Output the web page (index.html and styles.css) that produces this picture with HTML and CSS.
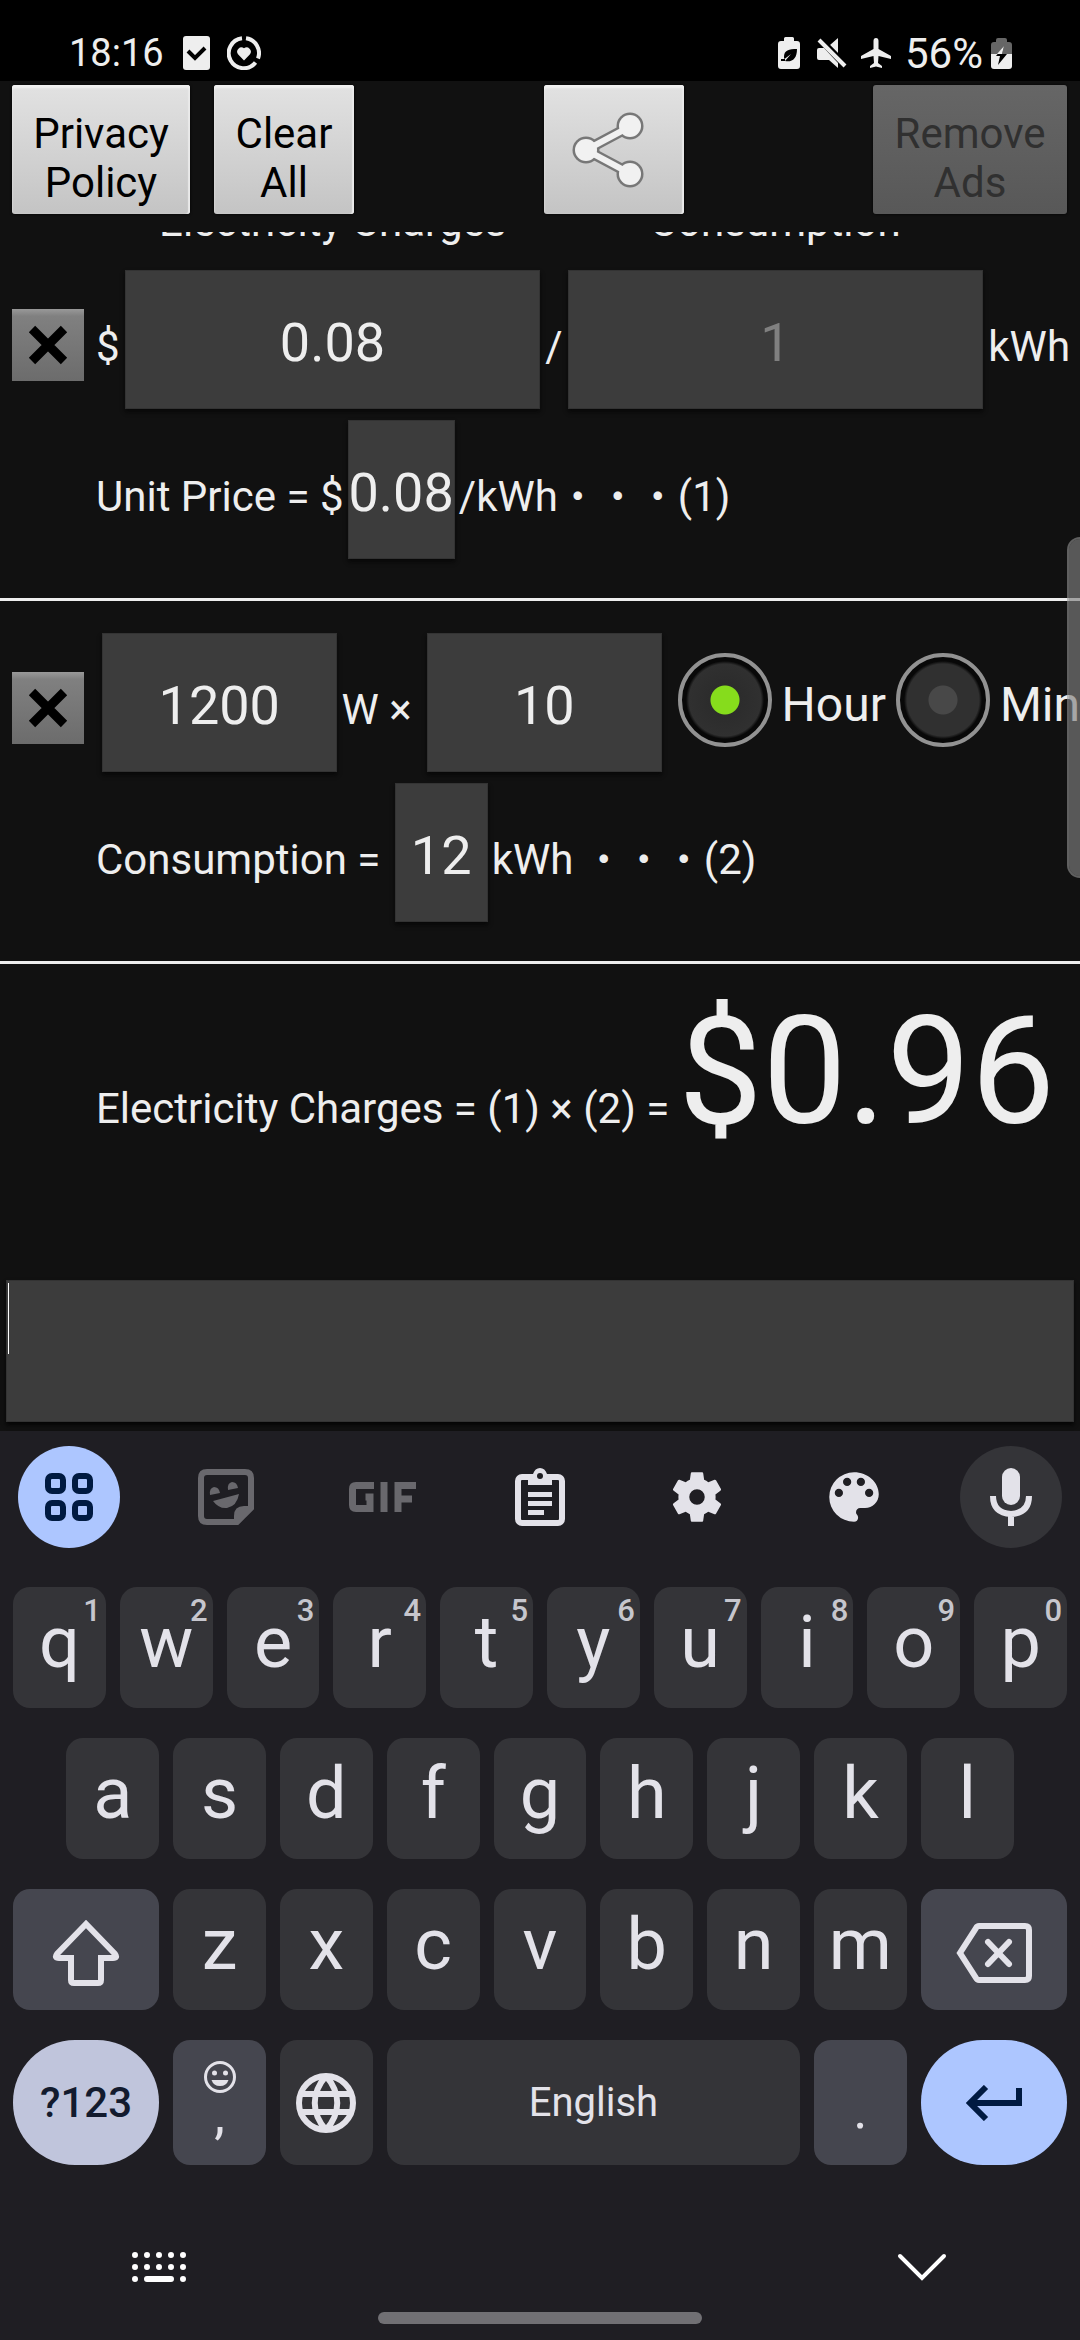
FILE: index.html
```html
<!DOCTYPE html>
<html lang="en">
<head>
<meta charset="utf-8">
<meta name="viewport" content="width=device-width, initial-scale=1">
<title>Electricity Charges</title>
<link rel="stylesheet" href="styles.css">
</head>
<body>
<header class="status">
  <div class="status-group">
    <time class="clock">18:16</time>
    <svg class="st-check" width="27" height="34" viewBox="0 0 27 34"><rect width="27" height="34" rx="3" fill="#eee"/><path d="M5 15l7 7L22 12" fill="none" stroke="#000" stroke-width="4"/></svg>
    <svg width="34" height="34" viewBox="0 0 34 34"><g fill="none" stroke="#eee" stroke-width="4"><path d="M15 2.300A15 15 0 1 0 28.500 26.500"/><path d="M19 2.300A15 15 0 0 1 31 22.500"/></g><path d="M17 24.500l-6-6.300a4.300 4.300 0 0 1 6-6 4.300 4.300 0 0 1 6 6z" fill="#eee"/></svg>
  </div>
  <div class="status-group status-right">
    <svg width="22" height="32" viewBox="0 0 22 32"><path d="M6 4V1.500Q6 0 7.500 0h7Q16 0 16 1.500V4h3q3 0 3 3v22q0 3-3 3H3q-3 0-3-3V7q0-3 3-3z" fill="#eee"/><path d="M19 12c-8 0-13 1-13 8q0 1 .5 2L13 17l-6 7c7 1.500 12-2 12-12zM3 22h4v2H3z" fill="#000"/></svg>
    <svg class="st-mute" width="30" height="30" viewBox="0 0 30 30"><path d="M2 10h5l14 15v5l-9-8H2q-2 0-2-2v-8q0-2 2-2zM13 7l8-7v15z" fill="#eee"/><path d="M4 0l26 27" stroke="#000" stroke-width="3"/><path d="M2 2l26 26" stroke="#eee" stroke-width="4"/></svg>
    <svg class="st-plane" width="30" height="30" viewBox="0 0 30 30"><path d="M12.500 3q0-3 2.500-3t2.500 3v8L30 18v3l-12.500-3-.5 7 4 3v2l-6-1.500L9 30v-2l4-3-.5-7L0 21v-3l12.500-7z" fill="#eee"/></svg>
    <span class="percent">56%</span>
    <svg width="21" height="31" viewBox="0 0 21 31"><path d="M5 4V2q0-2 2-2h7q2 0 2 2v2h2q3 0 3 3v9H0V7q0-3 3-3z" fill="#666"/><path d="M0 16h21v12q0 3-3 3H3q-3 0-3-3z" fill="#eee"/><path d="M13 8L5 18h4l-2 9 9-11h-5z" fill="#000"/><path d="M13 8l-7 8h5z" fill="#eee"/></svg>
  </div>
</header>

<main class="app">
  <nav class="toolbar">
    <button class="btn btn-privacy">Privacy<br>Policy</button>
    <button class="btn btn-clear">Clear<br>All</button>
    <button class="btn btn-share" aria-label="Share">
      <svg width="74" height="78" viewBox="0 0 74 78"><g stroke="#777" fill="#777"><path d="M60 15L15 39l45 24" fill="none" stroke-width="11"/><circle cx="59" cy="15" r="13.500" stroke="none"/><circle cx="15" cy="39" r="13.500" stroke="none"/><circle cx="59" cy="63" r="13.500" stroke="none"/></g><g stroke="#f1f1f1" fill="#f1f1f1"><path d="M60 15L15 39l45 24" fill="none" stroke-width="6"/><circle cx="59" cy="15" r="11" stroke="none"/><circle cx="15" cy="39" r="11" stroke="none"/><circle cx="59" cy="63" r="11" stroke="none"/></g></svg>
    </button>
    <button class="btn btn-ads" disabled>Remove<br>Ads</button>
  </nav>

  <div class="scroller">
    <section class="block block-first">
      <div class="heads">
        <label for="price">Electricity Charges</label>
        <label for="amount">Consumption</label>
      </div>
      <div class="row row-price">
        <button class="clear" aria-label="Clear price"><svg width="40" height="40" viewBox="0 0 40 40"><path d="M4 4l32 32M36 4L4 36" stroke="#000" stroke-width="9"/></svg></button>
        <span class="lead">$</span>
        <input class="field" id="price" value="0.08">
        <span>/</span>
        <input class="field" id="amount" placeholder="1">
        <span>kWh</span>
      </div>
      <div class="row row-result">
        <span>Unit Price = $</span>
        <output class="result">0.08</output>
        <span>/kWh<span class="dots">・・・</span>(1)</span>
      </div>
    </section>

    <section class="block">
      <div class="row row-power">
        <button class="clear" aria-label="Clear power"><svg width="40" height="40" viewBox="0 0 40 40"><path d="M4 4l32 32M36 4L4 36" stroke="#000" stroke-width="9"/></svg></button>
        <input class="field field-power" aria-label="Power" value="1200">
        <span>W ×&nbsp;</span>
        <input class="field" aria-label="Time" value="10">
        <div class="units">
          <label class="unit"><input type="radio" name="unit" checked><span>Hour</span></label>
          <label class="unit"><input type="radio" name="unit"><span>Min</span></label>
        </div>
      </div>
      <div class="row row-result">
        <span>Consumption =&nbsp;</span>
        <output class="result">12</output>
        <span>kWh <span class="dots">・・・</span>(2)</span>
      </div>
    </section>

    <section class="block total">
      <span>Electricity Charges = (1) × (2) =</span>
      <output class="total-value">$0.96</output>
    </section>
    <div class="thumb"></div>
  </div>

  <div class="memo-wrap"><textarea class="memo" aria-label="Memo"></textarea></div>
</main>

<section class="keyboard">
  <div class="tools">
    <button class="tool tool-apps" aria-label="Features"><svg width="50" height="50" viewBox="0 0 50 50" fill="none" stroke="#001a41" stroke-width="6"><rect x="4" y="4" width="15" height="15" rx="4"/><rect x="31" y="4" width="15" height="15" rx="4"/><rect x="4" y="31" width="15" height="15" rx="4"/><rect x="31" y="31" width="15" height="15" rx="4"/></svg></button>
    <button class="tool" aria-label="Stickers"><svg width="56" height="56" viewBox="0 0 56 56"><path d="M9 3h38q6 0 6 6v30L39 53H9q-6 0-6-6V9q0-6 6-6z" fill="none" stroke="#69686d" stroke-width="6"/><path d="M36 53V47q0-10 10-10h8L38 54zM15 32l26-7q-2 12-12 14-8 1-14-7zM12 26q-1-7 4-8 5 0 6 6zM30 21q-1-7 4-8 5 0 6 6z" fill="#69686d"/></svg></button>
    <button class="tool" aria-label="GIF"><svg width="68" height="30" viewBox="0 0 68 30" fill="none" stroke="#69686d" stroke-width="7"><path d="M25 3.500H7Q3.500 3.500 3.500 7v16q0 3.500 3.500 3.500h14V15h-4.500"/><path d="M35 0v30M49 30V3.500h18M49 17h14"/></svg></button>
    <button class="tool" aria-label="Clipboard"><svg width="50" height="58" viewBox="0 0 50 58"><rect x="3" y="9" width="44" height="46" rx="4" fill="none" stroke="#e3e2e9" stroke-width="6"/><path d="M13 6h5q2-6 7-6t7 6h5v11H13zM13 24h24v5H13zM13 33h24v5H13zM13 42h16v5H13z" fill="#e3e2e9"/><circle cx="25" cy="8" r="3" fill="#1f1e23"/></svg></button>
    <button class="tool" aria-label="Settings"><svg width="62" height="62" viewBox="0 0 24 24"><path fill="#e3e2e9" d="M19.140 12.940c.04-.3.060-.61.060-.94 0-.32-.02-.64-.07-.94l2.030-1.580c.18-.14.230-.41.120-.61l-1.920-3.320c-.12-.22-.37-.29-.59-.22l-2.390.96c-.5-.38-1.030-.7-1.620-.94L14.400 2.810c-.04-.24-.24-.41-.48-.41h-3.840c-.24 0-.43.17-.47.41L9.250 5.350c-.59.24-1.130.57-1.620.94l-2.390-.96c-.22-.08-.47 0-.59.22L2.740 8.870c-.12.21-.08.47.12.610l2.030 1.580c-.05.3-.09.63-.09.94s.02.640.07.940l-2.030 1.580c-.18.14-.23.41-.12.610l1.920 3.320c.12.22.37.290.59.220l2.390-.96c.5.380 1.030.700 1.620.940l.36 2.540c.05.24.24.410.48.410h3.840c.24 0 .44-.17.470-.41l.36-2.540c.59-.24 1.130-.56 1.620-.94l2.390.96c.22.080.47 0 .59-.22l1.920-3.320c.12-.22.070-.47-.12-.61zM12 15a3 3 0 1 1 0-6 3 3 0 0 1 0 6z"/></svg></button>
    <button class="tool" aria-label="Themes"><svg width="66" height="66" viewBox="0 0 24 24"><path fill="#e3e2e9" d="M12 3a9 9 0 0 0 0 18c.83 0 1.500-.67 1.500-1.500 0-.39-.15-.74-.39-1.010-.23-.26-.38-.61-.38-.99 0-.83.670-1.500 1.500-1.500H16a5 5 0 0 0 5-5c0-4.420-4.030-8-9-8zm-5.500 9a1.500 1.500 0 1 1 0-3 1.500 1.500 0 0 1 0 3zm3-4a1.500 1.500 0 1 1 0-3 1.500 1.500 0 0 1 0 3zm5 0a1.500 1.500 0 1 1 0-3 1.500 1.500 0 0 1 0 3zm3 4a1.500 1.500 0 1 1 0-3 1.500 1.500 0 0 1 0 3z"/></svg></button>
    <button class="tool tool-mic" aria-label="Voice input"><svg width="42" height="58" viewBox="0 0 42 58"><rect x="12" width="18" height="37" rx="9" fill="#e3e2e9"/><path d="M3 28q0 17 18 18 18-1 18-18M21 46v12" fill="none" stroke="#e3e2e9" stroke-width="6"/></svg></button>
  </div>

  <div class="keys">
    <button class="key">q<sup>1</sup></button>
    <button class="key">w<sup>2</sup></button>
    <button class="key">e<sup>3</sup></button>
    <button class="key">r<sup>4</sup></button>
    <button class="key">t<sup>5</sup></button>
    <button class="key">y<sup>6</sup></button>
    <button class="key">u<sup>7</sup></button>
    <button class="key">i<sup>8</sup></button>
    <button class="key">o<sup>9</sup></button>
    <button class="key">p<sup>0</sup></button>

    <button class="key key-a">a</button>
    <button class="key">s</button>
    <button class="key">d</button>
    <button class="key">f</button>
    <button class="key">g</button>
    <button class="key">h</button>
    <button class="key">j</button>
    <button class="key">k</button>
    <button class="key">l</button>

    <button class="key key-wide key-mod" aria-label="Shift"><svg width="68" height="66" viewBox="0 0 68 66"><path d="M34 4L5 34q-3 4 2 4h12v22q0 3 3 3h24q3 0 3-3V38h12q5 0 2-4z" fill="none" stroke="#e3e2e9" stroke-width="6"/></svg></button>
    <button class="key">z</button>
    <button class="key">x</button>
    <button class="key">c</button>
    <button class="key">v</button>
    <button class="key">b</button>
    <button class="key">n</button>
    <button class="key">m</button>
    <button class="key key-wide key-mod" aria-label="Backspace"><svg width="76" height="60" viewBox="0 0 76 60" fill="none" stroke="#e3e2e9" stroke-width="6"><path d="M23 3h46q4 0 4 4v46q0 4-4 4H23q-2 0-3-2L4 30 20 5q1-2 3-2z"/><path d="M32 19l21 22M53 19L32 41" stroke-linecap="round"/></svg></button>

    <button class="key key-wide key-sym">?123</button>
    <button class="key key-mod key-comma"><svg width="34" height="34" viewBox="0 0 34 34"><circle cx="17" cy="17" r="14.500" fill="none" stroke="#e3e2e9" stroke-width="3"/><circle cx="11.500" cy="13" r="2.500" fill="#e3e2e9"/><circle cx="22.500" cy="13" r="2.500" fill="#e3e2e9"/><path d="M8.500 20h17q-2 6-8.500 6t-8.500-6z" fill="#e3e2e9"/></svg><span>,</span></button>
    <button class="key key-icon" aria-label="Language"><svg width="60" height="60" viewBox="0 0 60 60" fill="none" stroke="#e3e2e9" stroke-width="6"><circle cx="30" cy="30" r="27"/><path d="M30 3C15 20 15 40 30 57M30 3c15 17 15 37 0 54M5 21h50M5 39h50"/></svg></button>
    <button class="key key-space">English</button>
    <button class="key key-mod key-dot">.</button>
    <button class="key key-wide key-enter" aria-label="Enter"><svg width="58" height="36" viewBox="0 0 58 36" fill="none" stroke="#001a41" stroke-width="6"><path d="M54 3v15H6M21 2L5 18l16 16"/></svg></button>
  </div>

  <div class="nav">
    <button class="nav-btn" aria-label="Choose keyboard"><svg width="54" height="30" viewBox="0 0 54 30" stroke="#fff" stroke-width="6" stroke-linecap="round"><path d="M3 3h0M15 3h0M27 3h0M39 3h0M51 3h0M3 15h0M15 15h0M27 15h0M39 15h0M51 15h0M3 27h0M15 27h24M51 27h0"/></svg></button>
    <button class="nav-btn" aria-label="Hide keyboard"><svg width="50" height="28" viewBox="0 0 50 28" fill="none" stroke="#fff" stroke-width="4" stroke-linecap="round"><path d="M3 3l22 22L47 3"/></svg></button>
  </div>
  <div class="home"></div>
</section>
</body>
</html>
```
FILE: styles.css
```css
* { box-sizing: border-box; }

body {
  margin: 0;
  min-height: 100vh;
  display: flex;
  flex-direction: column;
  background: #1f1e23;
  color: #eee;
  font-family: Roboto, "Liberation Sans", sans-serif;
  font-size: 42px;
  line-height: 49px;
}

button, input, textarea {
  margin: 0;
  border: 0;
  font: inherit;
  color: inherit;
}
button { padding: 0; background: none; }
svg { display: block; flex: none; }

/* status bar */
.status {
  display: flex;
  justify-content: space-between;
  height: 81px;
  padding: 25px 68px 0 69px;
  background: #000;
}
.status-group { display: flex; align-items: center; height: 56px; gap: 17px; }
.status-right { gap: 8px; }
.clock { font-size: 38px; }
.percent { font-size: 42px; }
.st-check { margin-left: 2px; }
.st-mute { margin-left: 9px; }
.st-plane { margin: 0 6px; }

/* app */
.app { background: #111; }
.toolbar {
  display: flex;
  height: 151px;
  padding: 4px 13px 18px 12px;
}
.btn {
  padding-top: 17px;
  border-radius: 3px;
  background: linear-gradient(#e2e2e2, #c4c4c4);
  box-shadow: inset 0 3px 2px #f0f0f0, inset -2px 0 1px #e8e8e8, 0 0 3px #000;
  color: #000;
}
.btn-privacy { width: 178px; }
.btn-clear { width: 140px; margin-left: 24px; }
.btn-share {
  display: flex;
  justify-content: center;
  align-items: center;
  width: 140px;
  margin: 0 auto;
  padding: 0 12px 0 0;
}
.btn-ads {
  width: 194px;
  background: linear-gradient(#666, #585858);
  box-shadow: 0 0 3px #000;
  color: #303030;
}

.scroller { position: relative; overflow: hidden; white-space: nowrap; }
.block { padding: 32px 0 39px; border-bottom: 3px solid #eee; }
.block-first { padding-top: 0; }
.heads {
  display: flex;
  gap: 27px;
  margin: -35px 97px 24px 125px;
  text-align: center;
}
.heads label { flex: 1; }

.row { display: flex; align-items: baseline; gap: 5px; }
.row + .row { margin-top: 11px; }
.row-price { padding: 0 10px 0 12px; }
.row-power { padding-left: 12px; }
.row-result { gap: 4px; padding-left: 96px; }
.lead { margin-left: 7px; }

.clear {
  display: flex;
  flex: none;
  align-self: center;
  justify-content: center;
  align-items: center;
  width: 72px;
  height: 72px;
  margin-top: 11px;
  background: linear-gradient(#999, #808080 10%, #6c6c6c);
}
.field, .result {
  height: 139px;
  padding: 6px 0 0;
  border: 1px solid #333;
  background: #3c3c3c;
  box-shadow: 0 3px 4px #080808;
  font-size: 54px;
  text-align: center;
}
.field { flex: 1; width: 0; min-width: 0; border-radius: 0; }
.field::placeholder { color: #808080; opacity: 1; }
.field-power { margin-left: 13px; }
.result { min-width: 93px; line-height: 131px; }
.dots { font-family: "Noto Sans CJK JP", sans-serif; font-size: 40px; }

.units {
  display: flex;
  align-self: center;
  gap: 10px;
  margin: 0 0 6px 11px;
  font-size: 48px;
}
.unit { display: flex; align-items: center; gap: 10px; }
.unit span { padding-top: 10px; }
.unit input {
  appearance: none;
  width: 94px;
  height: 94px;
  border: 4px solid #929292;
  border-radius: 50%;
  background: radial-gradient(circle, #484848 14px, #303030 15px, #303030 36px, #080808 39px);
}
.unit input:checked {
  background: radial-gradient(circle, #86dc1c 14px, #2c2c2c 15px, #303030 36px, #080808 39px);
}

.total {
  display: flex;
  align-items: baseline;
  gap: 9px;
  padding: 20px 0 0 96px;
  border: 0;
}
.total-value { font-size: 150px; line-height: 176px; }

.thumb {
  position: absolute;
  top: 305px;
  right: 0;
  width: 13px;
  height: 341px;
  border: 2px solid rgba(150, 150, 150, .6);
  border-right: 0;
  border-radius: 13px 0 0 13px;
  background: rgba(128, 128, 128, .65);
  background-clip: padding-box;
}

.memo-wrap { position: relative; padding: 120px 6px 9px; }
.memo {
  display: block;
  width: 100%;
  height: 142px;
  padding: 4px 3px;
  border: 1px solid #333;
  border-radius: 0;
  outline: 0;
  resize: none;
  background: #3c3c3c;
  box-shadow: 0 3px 4px #050505;
  font-size: 60px;
  line-height: 71px;
}
.memo-wrap::after {
  content: "";
  position: absolute;
  top: 123px;
  left: 8px;
  width: 1px;
  height: 71px;
  background: #fff;
}

/* keyboard */
.keyboard { flex: 1; display: flex; flex-direction: column; color: #e3e2e9; }
.tools { display: flex; justify-content: space-between; padding: 15px 18px 0; }
.tool {
  display: flex;
  justify-content: center;
  align-items: center;
  width: 102px;
  height: 102px;
  border-radius: 50%;
}
.tool-apps { background: #adc6ff; }
.tool-mic { background: #343438; }

.keys {
  display: grid;
  grid-template-columns: repeat(20, 1fr);
  grid-template-rows: 121px 121px 121px 125px;
  gap: 30px 14px;
  padding: 39px 13px 0;
}
.key {
  position: relative;
  grid-column: span 2;
  padding-bottom: 10px;
  border-radius: 17px;
  background: #343438;
  font-size: 72px;
}
.key sup {
  position: absolute;
  top: 8px;
  right: 5px;
  color: #c6c6cd;
  font-size: 31px;
  font-weight: 500;
  line-height: 32px;
}
.key-a { grid-column: 2 / span 2; }
.key-wide, .key-icon {
  display: flex;
  justify-content: center;
  align-items: center;
  padding: 0;
}
.key-wide { grid-column: span 3; }
.key-mod { background: #45464f; }
.key-wide.key-mod { padding-top: 6px; }
.key-sym {
  border-radius: 62px;
  background: #c0c5dc;
  color: #131b2e;
  font-size: 42px;
  font-weight: 500;
}
.key-comma {
  display: flex;
  flex-direction: column;
  align-items: center;
  padding: 20px 0 0;
  font-size: 54px;
  line-height: 41px;
}
.key-space { grid-column: span 8; padding: 0; font-size: 40px; }
.key-dot { padding: 14px 0 0; font-size: 54px; }
.key-enter { border-radius: 62px; background: #adc6ff; }

.nav { display: flex; justify-content: space-between; padding: 87px 133px 0 132px; }
.home {
  width: 30%;
  height: 12px;
  margin: auto auto 16px;
  border-radius: 6px;
  background: #717074;
}
```
